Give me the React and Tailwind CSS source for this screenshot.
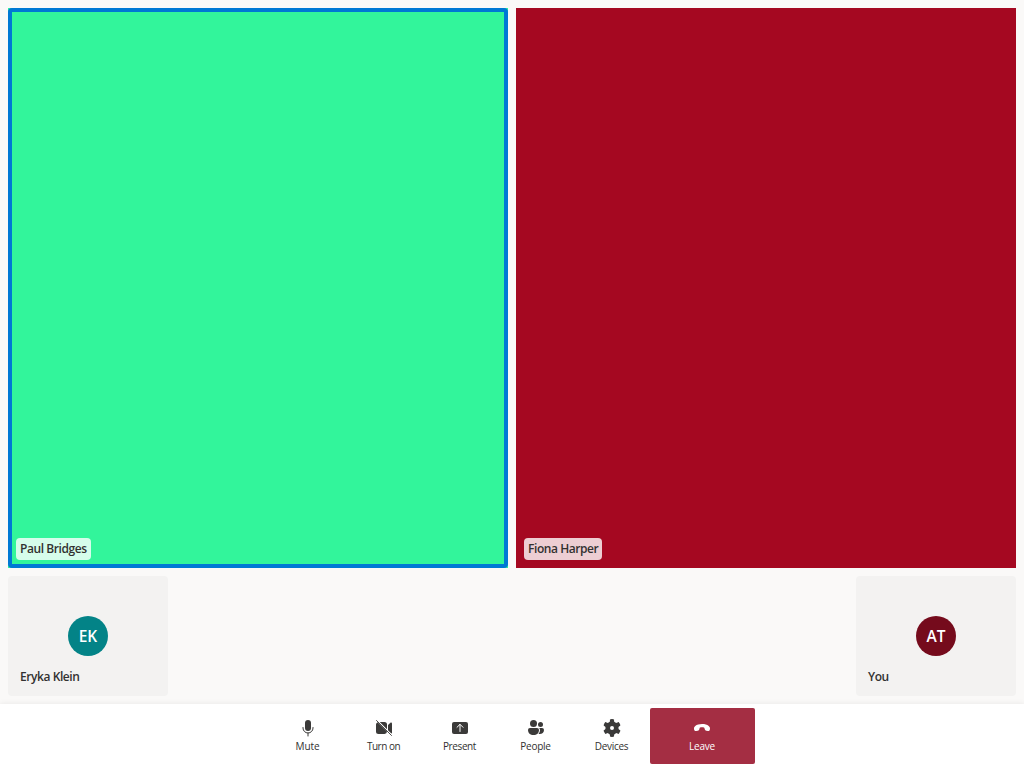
import React from "react";

const MicIcon = () => (
  <svg className="size-5" viewBox="0 0 20 20" fill="currentColor">
    <rect x="7" y="2" width="6" height="11" rx="3" />
    <path d="M5 9.5V10a5 5 0 0 0 10 0v-.5M10 15v3" fill="none" stroke="currentColor" strokeWidth="1" strokeLinecap="round" />
  </svg>
);

const VideoOffIcon = () => (
  <svg className="size-5" viewBox="0 0 20 20" fill="currentColor">
    <path d="M3.600 4.200 13 13.600a2.500 2.500 0 0 1-2.500 2.400h-6A2.500 2.500 0 0 1 2 13.500v-7A2.500 2.500 0 0 1 3.600 4.200Z" />
    <path d="M5.700 4h4.800A2.500 2.500 0 0 1 13 6.500v4.800Z" />
    <path d="M14 6.930v5.370l3.300 3.300c.4 0 .7-.3.700-.8V5.300c0-.7-.7-1.050-1.300-.7Z" />
    <path d="m2.500 2.500 15 15" fill="none" stroke="currentColor" strokeWidth="0.900" strokeLinecap="round" />
  </svg>
);

const PresentIcon = () => (
  <svg className="size-5" viewBox="0 0 20 20" fill="currentColor">
    <rect x="2" y="4" width="16" height="12" rx="2" />
    <path d="M10 13.500v-7M7 9.300l3-3 3 3" fill="none" stroke="#fff" strokeWidth="1" strokeLinecap="round" strokeLinejoin="round" />
  </svg>
);

const PeopleIcon = () => (
  <svg className="size-5" viewBox="0 0 20 20" fill="currentColor">
    <circle cx="7.500" cy="5.500" r="3.500" />
    <circle cx="14.500" cy="6.500" r="2.500" />
    <path d="M4 10h7a2 2 0 0 1 2 2c0 3-2.200 5-5.500 5S2 15 2 12a2 2 0 0 1 2-2Z" />
    <path d="M13.200 10H16a2 2 0 0 1 2 2c0 2.700-1.900 4-4.200 4-.5 0-.9-.1-1.300-.2 1-1 1.500-2.300 1.500-3.800 0-.8-.3-1.500-.8-2Z" />
  </svg>
);

const GearIcon = () => (
  <svg className="size-5" viewBox="0 0 20 20" fill="currentColor">
    <circle cx="10" cy="10" r="4.300" fill="none" stroke="currentColor" strokeWidth="4.600" />
    {[0, 60, 120, 180, 240, 300].map((angle) => (
      <path key={angle} transform={`rotate(${angle} 10 10)`} d="M7.500 6 8 1.800c.05-.3.250-.5.500-.550a9 9 0 0 1 3 0c.250.050.450.250.500.550L12.500 6Z" />
    ))}
  </svg>
);

const HangUpIcon = () => (
  <svg className="size-5" viewBox="0 0 20 20" fill="currentColor">
    <path d="m17.960 10.940-.17.850c-.15.800-.95 1.320-1.820 1.200l-1.700-.25c-.75-.1-1.270-.64-1.490-1.370L12.300 9.700C11.600 9.350 10.800 9.200 10 9.200s-1.600.15-2.300.5l-.35 1.670c-.16.750-.78 1.270-1.540 1.370l-1.690.250c-.86.120-1.750-.400-1.970-1.200l-.100-.850c-.200-1.200.200-2.220 1.200-3.020C4.900 6.640 7.300 6.020 10 6c2.700-.02 5.100.57 6.700 1.920 1 .800 1.460 1.820 1.260 3.020Z" />
  </svg>
);

const controls = [
  { label: "Mute", Icon: MicIcon, tracking: "tracking-[-0.1px]" },
  { label: "Turn on", Icon: VideoOffIcon, tracking: "tracking-[-0.5px]" },
  { label: "Present", Icon: PresentIcon, tracking: "tracking-[-0.4px]" },
  { label: "People", Icon: PeopleIcon, tracking: "tracking-[-0.25px]" },
  { label: "Devices", Icon: GearIcon, tracking: "tracking-[-0.3px]" },
];

const nameText = "flex h-[22px] items-center whitespace-nowrap px-1 text-xs font-semibold tracking-[-0.43px] text-[#323130]";

function NameTag({ children }) {
  return <span className={`${nameText} rounded bg-white/80`}>{children}</span>;
}

function AvatarTile({ initials, name, color }) {
  return (
    <div className="grid h-[120px] w-40 rounded bg-[#f3f2f1]">
      <div className="col-start-1 row-start-1 flex items-center justify-center">
        <div className={`flex size-10 items-center justify-center rounded-full pt-px text-[15.5px] font-semibold text-white ${color}`}>
          {initials}
        </div>
      </div>
      <div className="col-start-1 row-start-1 flex items-end p-2">
        <span className={nameText}>{name}</span>
      </div>
    </div>
  );
}

export default function App() {
  return (
    <div className="flex h-screen flex-col overflow-hidden bg-[#faf9f8] font-['Open_Sans','Noto_Sans',sans-serif]">
      <main className="flex min-h-0 flex-1 flex-col gap-2 p-2">
        <section className="grid min-h-0 flex-1 grid-cols-2 gap-2">
          <div className="flex bg-[#32f59b]">
            <div className="flex flex-1 items-end rounded border-4 border-[#0078d4] p-1">
              <NameTag>Paul Bridges</NameTag>
            </div>
          </div>
          <div className="flex items-end bg-[#a50821] p-2">
            <NameTag>Fiona Harper</NameTag>
          </div>
        </section>
        <section className="flex justify-between">
          <AvatarTile initials="EK" name="Eryka Klein" color="bg-[#038387]" />
          <AvatarTile initials="AT" name="You" color="bg-[#750b1c]" />
        </section>
      </main>
      <footer className="flex h-16 shrink-0 items-center justify-center bg-white shadow-[0_0_6px_rgba(0,0,0,0.08)]">
        {controls.map(({ label, Icon, tracking }) => (
          <button key={label} className="flex h-14 w-[76px] flex-col items-center pt-[10px] text-[#3b3a39]">
            <Icon />
            <span className={`mt-px text-[10px] leading-[14px] text-[#323130] ${tracking}`}>{label}</span>
          </button>
        ))}
        <button className="flex h-14 w-[105px] flex-col items-center rounded-[2px] bg-[#a42e43] pt-[10px] text-white">
          <HangUpIcon />
          <span className="mt-px text-[10px] leading-[14px] tracking-[-0.2px]">Leave</span>
        </button>
      </footer>
    </div>
  );
}
